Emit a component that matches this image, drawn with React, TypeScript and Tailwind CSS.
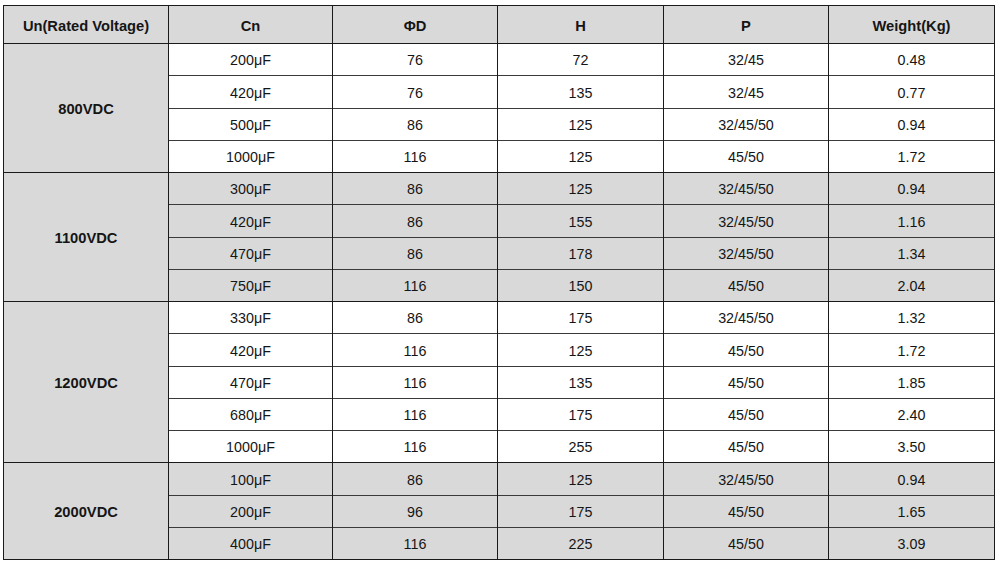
import React from "react";

type Group = {
  voltage: string;
  shaded: boolean;
  rows: string[][];
};

const GROUPS: Group[] = [
  {
    voltage: "800VDC",
    shaded: false,
    rows: [
      ["200μF", "76", "72", "32/45", "0.48"],
      ["420μF", "76", "135", "32/45", "0.77"],
      ["500μF", "86", "125", "32/45/50", "0.94"],
      ["1000μF", "116", "125", "45/50", "1.72"],
    ],
  },
  {
    voltage: "1100VDC",
    shaded: true,
    rows: [
      ["300μF", "86", "125", "32/45/50", "0.94"],
      ["420μF", "86", "155", "32/45/50", "1.16"],
      ["470μF", "86", "178", "32/45/50", "1.34"],
      ["750μF", "116", "150", "45/50", "2.04"],
    ],
  },
  {
    voltage: "1200VDC",
    shaded: false,
    rows: [
      ["330μF", "86", "175", "32/45/50", "1.32"],
      ["420μF", "116", "125", "45/50", "1.72"],
      ["470μF", "116", "135", "45/50", "1.85"],
      ["680μF", "116", "175", "45/50", "2.40"],
      ["1000μF", "116", "255", "45/50", "3.50"],
    ],
  },
  {
    voltage: "2000VDC",
    shaded: true,
    rows: [
      ["100μF", "86", "125", "32/45/50", "0.94"],
      ["200μF", "96", "175", "45/50", "1.65"],
      ["400μF", "116", "225", "45/50", "3.09"],
    ],
  },
];

const HEADERS = ["Un(Rated Voltage)", "Cn", "ΦD", "H", "P", "Weight(Kg)"];
const WIDTHS = ["w-[165px]", "w-[164px]", "w-[165px]", "w-[166px]", "w-[165px]", "w-[166px]"];

const App: React.FC = () => {
  return (
    <div className="w-[1000px] h-[562px] bg-white pl-[3px] pt-[5px] font-['Liberation_Sans',Arial,sans-serif] text-[14.3px] text-[#151515]">
      <table className="w-[991px] table-fixed border-collapse border border-[#1a1a1a]">
        <thead>
          <tr className="h-[38px] bg-[#d9d9d9]">
            {HEADERS.map((h, i) => (
              <th
                key={h}
                className={`${WIDTHS[i]} border border-[#1a1a1a] pt-[3px] text-center text-[14.7px] font-bold`}
              >
                {h}
              </th>
            ))}
          </tr>
        </thead>
        <tbody>
          {GROUPS.map((group) =>
            group.rows.map((row, ri) => (
              <tr
                key={group.voltage + ri}
                className={`h-[32.25px] ${group.shaded ? "bg-[#d9d9d9]" : "bg-white"}`}
              >
                {ri === 0 && (
                  <td
                    rowSpan={group.rows.length}
                    className="border border-[#1a1a1a] bg-[#d9d9d9] pt-[2px] text-center text-[14.7px] font-bold"
                  >
                    {group.voltage}
                  </td>
                )}
                {row.map((cell, ci) => (
                  <td
                    key={ci}
                    className={`border-x border-[#1a1a1a] pt-[3px] text-center ${
                      ri === 0 ? "border-t" : "border-t border-t-[#3a3a3a]"
                    }`}
                  >
                    {cell}
                  </td>
                ))}
              </tr>
            ))
          )}
        </tbody>
      </table>
    </div>
  );
};

export default App;
